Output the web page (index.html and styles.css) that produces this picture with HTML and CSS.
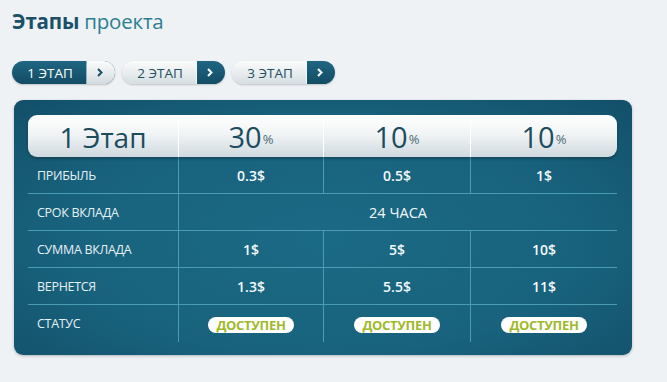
FILE: index.html
```html
<!DOCTYPE html>
<html lang="ru">
<head>
<meta charset="utf-8">
<link rel="stylesheet" href="styles.css">
</head>
<body>
<div class="page">
  <h1 class="title"><b>Этапы</b> проекта</h1>
  <div class="tabs">
    <div class="tab active"><span class="tab-label">1 ЭТАП</span><span class="tab-arrow"><svg width="8" height="9" viewBox="0 0 8 9"><path d="M2 1 L5.5 4.5 L2 8" fill="none" stroke="currentColor" stroke-width="2"/></svg></span></div>
    <div class="tab"><span class="tab-label">2 ЭТАП</span><span class="tab-arrow"><svg width="8" height="9" viewBox="0 0 8 9"><path d="M2 1 L5.5 4.5 L2 8" fill="none" stroke="currentColor" stroke-width="2"/></svg></span></div>
    <div class="tab"><span class="tab-label">3 ЭТАП</span><span class="tab-arrow"><svg width="8" height="9" viewBox="0 0 8 9"><path d="M2 1 L5.5 4.5 L2 8" fill="none" stroke="currentColor" stroke-width="2"/></svg></span></div>
  </div>
  <div class="panel">
    <div class="grid">
      <div class="head">
        <div class="hc first">1 Этап</div>
        <div class="hc">30<small>%</small></div>
        <div class="hc">10<small>%</small></div>
        <div class="hc">10<small>%</small></div>
      </div>
      <div class="row">
        <div class="lab">ПРИБЫЛЬ</div><div class="val">0.3$</div><div class="val">0.5$</div><div class="val">1$</div>
      </div>
      <div class="row">
        <div class="lab">СРОК ВКЛАДА</div><div class="val wide">24 ЧАСА</div>
      </div>
      <div class="row">
        <div class="lab">СУММА ВКЛАДА</div><div class="val">1$</div><div class="val">5$</div><div class="val">10$</div>
      </div>
      <div class="row">
        <div class="lab">ВЕРНЕТСЯ</div><div class="val">1.3$</div><div class="val">5.5$</div><div class="val">11$</div>
      </div>
      <div class="row last">
        <div class="lab">СТАТУС</div><div class="val"><span class="badge">ДОСТУПЕН</span></div><div class="val"><span class="badge">ДОСТУПЕН</span></div><div class="val"><span class="badge">ДОСТУПЕН</span></div>
      </div>
    </div>
  </div>
</div>
</body>
</html>
```
FILE: styles.css
```css
html, body {
  margin: 0;
  padding: 0;
  background: #eef2f5;
  font-family: "Open Sans", "DejaVu Sans", sans-serif;
}
.page {
  width: 667px;
  height: 382px;
  padding: 7px 0 0 12px;
  box-sizing: border-box;
}
.title {
  margin: 0;
  font-size: 20.5px;
  font-weight: 400;
  color: #2c7e93;
  line-height: 28px;
  letter-spacing: -0.2px;
}
.title b {
  color: #1a5068;
  font-weight: 700;
}
.tabs {
  display: flex;
  gap: 7px;
  margin-top: 26px;
  height: 23px;
}
.tab {
  display: flex;
  height: 23px;
  width: 103px;
  border-radius: 12px;
  overflow: hidden;
  box-shadow: 0 1px 2px rgba(0,0,0,0.2);
  background: linear-gradient(#fbfcfc, #d6dee2);
  color: #244f60;
}
.tab-label {
  flex: 1;
  display: flex;
  align-items: center;
  justify-content: center;
  font-size: 13.5px;
  font-weight: 400;
  padding-left: 2px;
  border-right: 1px solid #f4f7f8;
}
.tab-arrow {
  width: 26px;
  display: flex;
  align-items: center;
  justify-content: center;
  background: linear-gradient(#1e6683, #134c64);
  color: #fff;
  padding-right: 2px;
}
.tab.active {
  background: linear-gradient(#1e6683, #134c64);
  color: #fff;
}
.tab.active .tab-label { border-right-color: #8fb3c2; }
.tab.active .tab-arrow {
  background: linear-gradient(#fbfcfc, #d3dbdf);
  color: #1a5068;
}
.panel {
  margin-top: 16px;
  margin-left: 2px;
  width: 618px;
  height: 255px;
  box-sizing: border-box;
  padding: 15px 15px 14px 14px;
  border-radius: 9px;
  background: radial-gradient(ellipse 70% 75% at 50% 55%, #1b6a85 0%, #18627d 60%, #13506a 100%);
  box-shadow: 0 1px 3px rgba(0,0,0,0.25);
}
.grid {
  display: flex;
  flex-direction: column;
}
.head, .row {
  display: grid;
  grid-template-columns: 150px 145px 147px 147px;
}
.head {
  height: 42px;
  border-radius: 9px;
  background: linear-gradient(#ffffff 0%, #f1f4f5 45%, #cfd9de 100%);
  box-shadow: 0 2px 3px rgba(0,0,0,0.25);
  position: relative;
  z-index: 1;
}
.hc {
  display: flex;
  align-items: center;
  justify-content: center;
  font-size: 29px;
  font-weight: 400;
  color: #1c4c5e;
  border-left: 1px solid #ffffff;
  line-height: 1;
  padding-top: 1px;
}
.hc.first { border-left: none; font-size: 28px; }
.hc small {
  font-size: 13px;
  color: #4d6b76;
  align-self: flex-end;
  margin-bottom: 11px;
  margin-left: 1px;
}
.row {
  height: 37px;
  border-bottom: 1px solid #4a9bb4;
  box-sizing: border-box;
}
.row.last { border-bottom: none; }
.lab {
  display: flex;
  align-items: center;
  padding-left: 9px;
  font-size: 12.5px;
  color: #e6f1f5;
  letter-spacing: -0.3px;
}
.val {
  display: flex;
  align-items: center;
  justify-content: center;
  font-size: 14px;
  font-weight: 600;
  color: #f4fafc;
  border-left: 1px solid #4a9bb4;
}
.val.wide {
  grid-column: 2 / 5;
  font-weight: 400;
  font-size: 14.5px;
}
.badge {
  display: inline-block;
  width: 86px;
  height: 16px;
  line-height: 16px;
  border-radius: 8px;
  background: #fff;
  color: #a0b92a;
  font-size: 13px;
  font-weight: 700;
  text-align: center;
  margin-top: 2px;
  letter-spacing: -0.3px;
}
```
